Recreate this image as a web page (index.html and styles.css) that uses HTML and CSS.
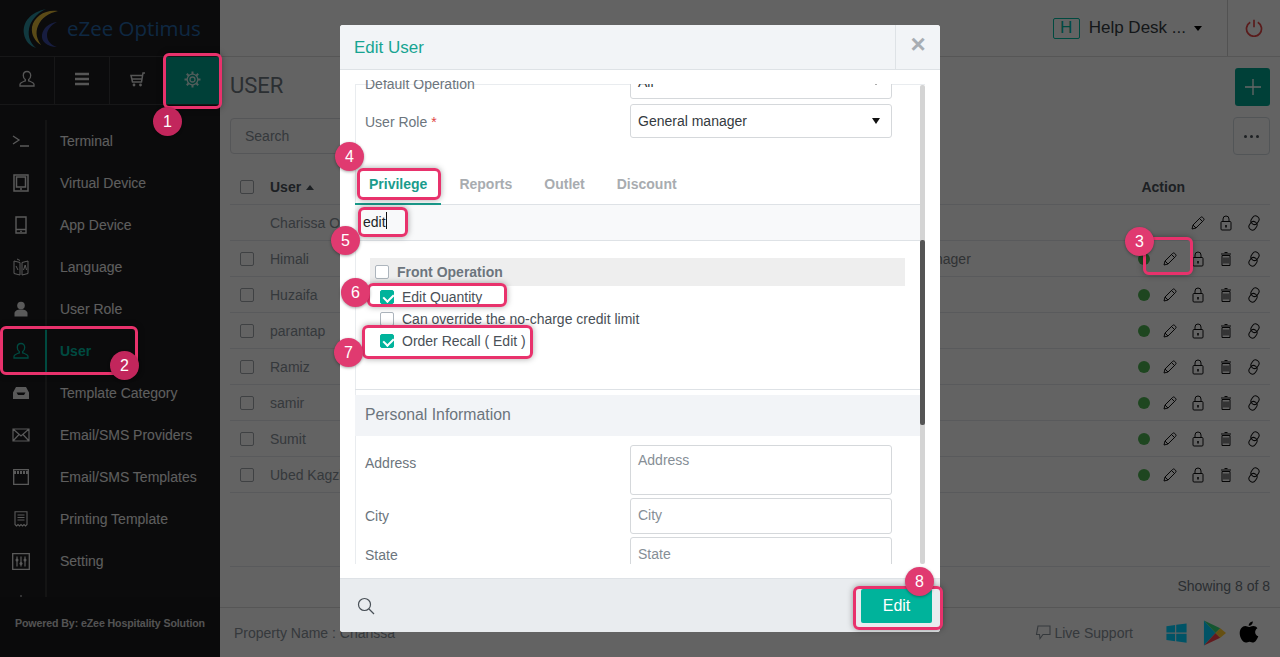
FILE: index.html
```html
<!DOCTYPE html>
<html lang="en">
<head>
<meta charset="utf-8">
<title>Edit User</title>
<link rel="stylesheet" href="styles.css">
</head>
<body>
<svg class="defs" width="0" height="0" aria-hidden="true">
  <symbol id="i-pencil" viewBox="0 0 16 16"><path d="M2 14l1-4 7.500-7.500a1.600 1.600 0 0 1 2.300 0l.7.7a1.600 1.600 0 0 1 0 2.300L6 13zM3 10l3 3M9.500 3.500l3 3" fill="none" stroke="currentColor" stroke-width="1" stroke-linejoin="round"/></symbol>
  <symbol id="i-lock" viewBox="0 0 16 16"><path d="M3 7.500q0-1 1-1h8q1 0 1 1v6.500q0 1-1 1H4q-1 0-1-1zM5 6.500V4a3 3 0 0 1 6 0v2.500" fill="none" stroke="currentColor" stroke-width="1"/><path d="M8 10v2.500" stroke="currentColor" stroke-width="1.600"/></symbol>
  <symbol id="i-trash" viewBox="0 0 16 16"><path d="M4 4.500h8v10H4zM3 3h10M6.500 1.500h3M6 6.500v6M8 6.500v6M10 6.500v6" fill="none" stroke="currentColor" stroke-width="1"/></symbol>
  <symbol id="i-link" viewBox="0 0 16 16"><rect x="5.500" y="0.800" width="7" height="8.800" rx="3.500" transform="rotate(35 9 5.200)" fill="none" stroke="currentColor"/><rect x="3.500" y="6.400" width="7" height="8.800" rx="3.500" transform="rotate(35 7 10.800)" fill="none" stroke="currentColor"/></symbol>
  <symbol id="i-user" viewBox="0 0 18 18"><path d="M9 1.500c-2.400 0-3.700 1.800-3.700 4 0 1.700.8 3.200 2 4v1.300c-1.800.8-5.300 1.700-5.300 3.700v1.500h14v-1.500c0-2-3.500-2.900-5.300-3.700V9.500c1.200-.8 2-2.300 2-4 0-2.200-1.300-4-3.700-4z" fill="none" stroke="currentColor" stroke-width="1.300"/></symbol>
</svg>

<div class="app">
  <aside class="sidebar">
    <div class="logo">
      <svg class="logo-mark" width="44" height="44" viewBox="0 0 44 44">
        <path d="M27 3C12 6 3 16 5 28c1 7 6 12 12 14C10 36 8 28 11 19c3-7 9-13 16-16z" fill="#2b8f9e"/>
        <path d="M39 5C27 3 15 10 13 21c-1 8 3 14 9 18-4-6-6-12-3-19C22 12 30 7 39 5z" fill="#e0b93a"/>
        <path d="M38 16C30 17 24 22 23 29c-1 6 5 12 15 12-6-2-10-6-10-12 0-5 4-10 10-13z" fill="#3a4aa0"/>
      </svg>
      <span class="logo-text">eZee Optimus</span>
    </div>
    <nav class="tabs">
      <a class="tab"><svg width="18" height="18"><use href="#i-user"/></svg></a>
      <a class="tab"><svg width="16" height="14" viewBox="0 0 16 14"><path d="M1 2h14M1 7h14M1 12h14" stroke="currentColor" stroke-width="2.400"/></svg></a>
      <a class="tab"><svg width="17" height="16" viewBox="0 0 17 16"><path d="M16 2h-2l-1.500 9H3.500L2 4.500h11.300M3.500 8h9" fill="none" stroke="currentColor" stroke-width="1.500"/><circle cx="5" cy="14" r="1.400" fill="currentColor"/><circle cx="11.500" cy="14" r="1.400" fill="currentColor"/></svg></a>
      <a class="tab tab-on"><svg width="17" height="17" viewBox="0 0 17 17"><circle cx="8.500" cy="8.500" r="2.500" fill="none" stroke="currentColor" stroke-width="1.300"/><circle cx="8.500" cy="8.500" r="5.300" fill="none" stroke="currentColor" stroke-width="1.300"/><path d="M8.500 0.500v2.600M8.500 13.900v2.600M.5 8.500h2.600M13.900 8.500h2.600M2.800 2.800l1.900 1.900M12.300 12.300l1.900 1.900M14.200 2.800l-1.900 1.900M4.700 12.300l-1.900 1.900" stroke="currentColor" stroke-width="2"/></svg></a>
    </nav>
    <ul class="menu">
      <li class="item"><span class="ico"><svg width="18" height="12" viewBox="0 0 18 12"><path d="M1 1l6 4-6 4M8 11h9" fill="none" stroke="currentColor" stroke-width="1.300"/></svg></span><span class="lbl">Terminal</span></li>
      <li class="item"><span class="ico"><svg width="16" height="18" viewBox="0 0 16 18"><path d="M1 1h14v16H1zM3.500 3h9v10h-9z" fill="none" stroke="currentColor" stroke-width="1.500"/><circle cx="8" cy="15" r="1" fill="currentColor"/></svg></span><span class="lbl">Virtual Device</span></li>
      <li class="item"><span class="ico"><svg width="12" height="18" viewBox="0 0 12 18"><path d="M1 1h10v16H1zM1 13.500h10" fill="none" stroke="currentColor" stroke-width="1.400"/><path d="M5 15.300h2" stroke="currentColor"/></svg></span><span class="lbl">App Device</span></li>
      <li class="item"><span class="ico"><svg width="16" height="18" viewBox="0 0 16 18"><path d="M1 3l6 1.500V17l-6-1.500zM9 4.500L15 3v12.500L9 17zM4 1l3 1.500" fill="none" stroke="currentColor"/><path d="M3 8l2 4M10.500 12l1.700-5 1.300 5" fill="none" stroke="currentColor"/></svg></span><span class="lbl">Language</span></li>
      <li class="item"><span class="ico"><svg width="14" height="16" viewBox="0 0 14 16"><circle cx="7" cy="4.500" r="3.800" fill="currentColor"/><path d="M0.500 15.500v-3c0-2.500 2.500-4 6.500-4s6.500 1.500 6.500 4v3z" fill="currentColor"/></svg></span><span class="lbl">User Role</span></li>
      <li class="item item-on"><span class="ico"><svg width="18" height="18"><use href="#i-user"/></svg></span><span class="lbl">User</span></li>
      <li class="item"><span class="ico"><svg width="16" height="12" viewBox="0 0 16 12"><path d="M3 0h10l3 5.500V12H0V5.500zM3.500 5.500l1.500 2.500h6l1.500-2.500z" fill="currentColor" fill-rule="evenodd"/></svg></span><span class="lbl">Template Category</span></li>
      <li class="item"><span class="ico"><svg width="18" height="14" viewBox="0 0 18 14"><path d="M1 1h16v12H1zM1 1l8 7 8-7M1 13l6-6.500M17 13l-6-6.500" fill="none" stroke="currentColor" stroke-width="1.200"/></svg></span><span class="lbl">Email/SMS Providers</span></li>
      <li class="item"><span class="ico"><svg width="16" height="16" viewBox="0 0 16 16"><path d="M.7 .7h14.600v14.600H.7z" fill="none" stroke="currentColor" stroke-width="1.300"/><path d="M1 3.500h14" stroke="currentColor" stroke-width="3" stroke-dasharray="2 1"/></svg></span><span class="lbl">Email/SMS Templates</span></li>
      <li class="item"><span class="ico"><svg width="14" height="16" viewBox="0 0 14 16"><path d="M1 .7h12V13.500l-1.500 1.500-1.500-1.500-1.500 1.500L7 13.500 5.500 15 4 13.500 2.500 15 1 13.500zM3.500 4h7M3.500 6.500h7M3.500 9h7" fill="none" stroke="currentColor" stroke-width="1.100"/></svg></span><span class="lbl">Printing Template</span></li>
      <li class="item"><span class="ico"><svg width="18" height="17" viewBox="0 0 18 17"><path d="M.7 .7h16.600v15.600H.7z" fill="none" stroke="currentColor" stroke-width="1.300"/><path d="M5 3.500v10M9 3.500v10M13 3.500v10" stroke="currentColor" stroke-width="1.200"/><circle cx="5" cy="7" r="1.500" fill="currentColor"/><circle cx="9" cy="10.500" r="1.500" fill="currentColor"/><circle cx="13" cy="7" r="1.500" fill="currentColor"/></svg></span><span class="lbl">Setting</span></li>
      <li class="item"><span class="ico"><svg width="4" height="16" viewBox="0 0 4 16"><path d="M1 1h2" stroke="currentColor"/></svg></span></li>
    </ul>
    <div class="powered">Powered By: eZee Hospitality Solution</div>
  </aside>

  <div class="main">
    <header class="topbar">
      <span class="h-badge">H</span>
      <span class="desk">Help Desk ...</span>
      <span class="caret"></span>
      <span class="power"><svg width="18" height="18" viewBox="0 0 18 18"><path d="M5.200 3.300a7.500 7.500 0 1 0 7.600 0M9 .8v7.500" fill="none" stroke="#e04545" stroke-width="1.700"/></svg></span>
    </header>
    <section class="content">
      <div class="title-row">
        <h1>USER</h1>
        <button class="add"><svg width="18" height="18" viewBox="0 0 18 18"><path d="M9 1v16M1 9h16" stroke="#fff" stroke-width="1.300"/></svg></button>
      </div>
      <div class="search-row">
        <div class="search">Search</div>
        <button class="more"><i></i><i></i><i></i></button>
      </div>
      <div class="table">
        <div class="row head"><span class="cb"></span><span class="name">User <em class="up"></em></span><span class="action">Action</span></div>
        <div class="row"><span class="name plain">Charissa Owner</span><span class="acts"><svg><use href="#i-pencil"/></svg><svg><use href="#i-lock"/></svg><svg><use href="#i-link"/></svg></span></div>
        <div class="row"><span class="cb"></span><span class="name">Himali</span><span class="role">Manager</span><span class="acts"><u class="dot"></u><svg><use href="#i-pencil"/></svg><svg><use href="#i-lock"/></svg><svg><use href="#i-trash"/></svg><svg><use href="#i-link"/></svg></span></div>
        <div class="row"><span class="cb"></span><span class="name">Huzaifa</span><span class="acts"><u class="dot"></u><svg><use href="#i-pencil"/></svg><svg><use href="#i-lock"/></svg><svg><use href="#i-trash"/></svg><svg><use href="#i-link"/></svg></span></div>
        <div class="row"><span class="cb"></span><span class="name">parantap</span><span class="acts"><u class="dot"></u><svg><use href="#i-pencil"/></svg><svg><use href="#i-lock"/></svg><svg><use href="#i-trash"/></svg><svg><use href="#i-link"/></svg></span></div>
        <div class="row"><span class="cb"></span><span class="name">Ramiz</span><span class="acts"><u class="dot"></u><svg><use href="#i-pencil"/></svg><svg><use href="#i-lock"/></svg><svg><use href="#i-trash"/></svg><svg><use href="#i-link"/></svg></span></div>
        <div class="row"><span class="cb"></span><span class="name">samir</span><span class="acts"><u class="dot"></u><svg><use href="#i-pencil"/></svg><svg><use href="#i-lock"/></svg><svg><use href="#i-trash"/></svg><svg><use href="#i-link"/></svg></span></div>
        <div class="row"><span class="cb"></span><span class="name">Sumit</span><span class="acts"><u class="dot"></u><svg><use href="#i-pencil"/></svg><svg><use href="#i-lock"/></svg><svg><use href="#i-trash"/></svg><svg><use href="#i-link"/></svg></span></div>
        <div class="row"><span class="cb"></span><span class="name">Ubed Kagzi</span><span class="acts"><u class="dot"></u><svg><use href="#i-pencil"/></svg><svg><use href="#i-lock"/></svg><svg><use href="#i-trash"/></svg><svg><use href="#i-link"/></svg></span></div>
      </div>
      <div class="spacer"></div>
      <div class="showing">Showing 8 of 8</div>
    </section>
    <footer class="foot">
      <span class="prop">Property Name : Charissa</span>
      <span class="live"><svg width="16" height="15" viewBox="0 0 16 15"><path d="M3 1h12v8.500H8L5 13.500l-.5-4H1.500z" fill="none" stroke="currentColor" stroke-width="1.100"/></svg>Live Support</span>
      <svg class="store win" width="23" height="22" viewBox="0 0 24 24"><path d="M1 4.500l9.500-1.300v8.300H1zM11.700 3L23 1.500v10H11.700zM1 12.700h9.500V21L1 19.700zM11.700 12.700H23v10L11.700 21z" fill="#00d0ff"/></svg>
      <svg class="store" width="23" height="26" viewBox="0 0 24 26"><path d="M1 0v26l12-13z" fill="#00d0ff"/><path d="M1 0l12 13 5-5z" fill="#36d87a"/><path d="M1 26l12-13 5 5z" fill="#f5434b"/><path d="M18 8l6 5-6 5-5-5z" fill="#ffc82d"/></svg>
      <svg class="store" width="20" height="23" viewBox="0 0 20 24"><path d="M14 .5c.1 2.500-2 4.700-4.300 4.500C9.500 2.700 11.800.6 14 .5zM10 6.300c1 0 2.500-1.200 4.500-1.200 1.700 0 3.300.9 4.300 2.400-3.500 2-3 7 .9 8.500-1 2.700-3 6.500-5.200 6.500-1.400 0-2.200-.9-3.900-.9s-2.600.9-3.900.9C3.500 22.500.3 17 .3 12.800c0-4.500 2.900-7.500 5.700-7.500 1.700 0 3 1 4 1z" fill="#000"/></svg>
    </footer>
  </div>
</div>

<div class="overlay"></div>
<div class="under-role">nager</div>

<div class="modal">
  <div class="m-head"><h2>Edit User</h2><span class="close">&times;</span></div>
  <div class="m-body">
    <div class="scroller">
      <div class="f-row clip"><label>Default Operation</label><div class="field sel">All<span class="caret dark"></span></div></div>
      <div class="f-row role-row"><label>User Role <b>*</b></label><div class="field sel">General manager<span class="caret dark"></span></div></div>
      <div class="m-tabs"><span class="m-tab on">Privilege</span><span class="m-tab">Reports</span><span class="m-tab">Outlet</span><span class="m-tab">Discount</span></div>
      <div class="filter">edit<span class="cursor"></span></div>
      <div class="priv">
        <div class="priv-head"><span class="box"></span>Front Operation</div>
        <div class="priv-item"><span class="box on"></span>Edit Quantity</div>
        <div class="priv-item"><span class="box"></span>Can override the no-charge credit limit</div>
        <div class="priv-item"><span class="box on"></span>Order Recall ( Edit )</div>
      </div>
      <div class="sec">Personal Information</div>
      <div class="f-row addr"><label>Address</label><div class="field area">Address</div></div>
      <div class="f-row"><label>City</label><div class="field ph">City</div></div>
      <div class="f-row"><label>State</label><div class="field ph">State</div></div>
      <i class="thumb"></i>
    </div>
  </div>
  <div class="m-foot">
    <svg width="18" height="18" viewBox="0 0 18 18"><circle cx="7.500" cy="7.500" r="6" fill="none" stroke="#495057" stroke-width="1.200"/><path d="M12 12l5 5" stroke="#495057" stroke-width="1.200"/></svg>
    <button class="save">Edit</button>
  </div>
</div>

<div class="mark m1"></div><div class="num n1">1</div>
<div class="mark m2"></div><div class="num n2">2</div>
<div class="mark m3"></div><div class="num n3">3</div>
<div class="mark m4"></div><div class="num n4">4</div>
<div class="mark m5"></div><div class="num n5">5</div>
<div class="mark m6"></div><div class="num n6">6</div>
<div class="mark m7"></div><div class="num n7">7</div>
<div class="mark m8"></div><div class="num n8">8</div>
</body>
</html>
```

FILE: styles.css
```css
* { box-sizing: border-box; }
html, body { margin: 0; height: 657px; overflow: hidden; }
body { font-family: "Liberation Sans", Arial, sans-serif; font-size: 14px; color: #6c757d; background: #fff; position: relative; }
.defs { position: absolute; }
.app { display: flex; height: 657px; }

/* sidebar */
.sidebar { width: 220px; flex: none; background: #1c1c1f; color: #fff; display: flex; flex-direction: column; }
.logo { height: 57px; display: flex; align-items: center; padding-left: 19px; border-bottom: 1px solid #3a3a3d; }
.logo-mark { flex: none; margin-right: 4px; }
.logo-text { font-family: "Open Sans", sans-serif; font-size: 20.500px; color: #2565a5; }
.tabs { display: flex; height: 48px; border-bottom: 1px solid #3a3a3d; }
.tab { width: 55px; display: flex; align-items: center; justify-content: center; border-right: 1px solid #3a3a3d; padding-bottom: 3px; color: #d8d8d8; }
.tab-on { background: #00a08c; border: 0; color: #c8e8e2; }
.menu { list-style: none; margin: 15px 0 0; padding: 0; height: 477px; overflow: hidden; }
.item { height: 42px; display: flex; align-items: center; }
.ico { width: 47px; height: 100%; flex: none; display: flex; align-items: center; justify-content: center; padding-right: 4px; border-right: 2px solid #333; color: #e0e0e0; }
.lbl { padding-left: 13px; color: #ececec; }
.item-on .ico { color: #00b8a0; border-right-color: #00b8a0; }
.item-on .lbl { color: #00b8a0; font-weight: bold; }
.powered { margin-top: auto; height: 60px; background: #1a1a1d; padding-top: 20px; text-align: center; font-size: 10.600px; font-weight: bold; color: #d0d0d0; letter-spacing: -.1px; }

/* main */
.main { flex: 1; min-width: 0; display: flex; flex-direction: column; background: #f7f7f8; }
.topbar { height: 57px; flex: none; display: flex; align-items: center; border-bottom: 1px solid #d6d6d6; justify-content: flex-end; }
.h-badge { width: 27px; height: 21px; border: 1px solid #00b8a0; border-radius: 2px; color: #00b8a0; font-size: 17px; display: flex; align-items: center; justify-content: center; margin-right: 9px; }
.desk { font-size: 17px; color: #343a40; margin-right: 8px; }
.caret { width: 0; height: 0; border: 4px solid transparent; border-top: 5px solid #000; border-bottom: 0; }
.power { width: 53px; height: 56px; margin-left: 25px; border-left: 1px solid #ccc; display: flex; align-items: center; justify-content: center; }
.content { flex: 1; min-height: 0; padding: 0 10px; display: flex; flex-direction: column; }
.title-row { display: flex; justify-content: space-between; height: 61px; padding-top: 11px; }
h1 { margin: 5px 0 0; font-size: 22px; font-weight: 400; color: #6c757d; font-family: Roboto, sans-serif; }
.add { width: 35px; height: 38px; border: 0; border-radius: 3px; background: #00a08c; padding: 0; display: flex; align-items: center; justify-content: center; }
.search-row { display: flex; justify-content: space-between; height: 51px; }
.search { width: 340px; height: 36px; border: 1px solid #d5d8db; border-radius: 4px; padding: 9px 14px; color: #868e96; }
.more { width: 37px; height: 38px; background: transparent; border: 1px solid #ced4da; border-radius: 4px; display: flex; gap: 3px; align-items: center; justify-content: center; padding: 0; margin-top: -1px; }
.more i { width: 3px; height: 3px; border-radius: 50%; background: #495057; }
.table { display: flex; flex-direction: column; }
.row { height: 36px; flex: none; display: flex; align-items: center; border-bottom: 1px solid #dee2e6; padding-left: 10px; position: relative; color: #868e96; }
.head { height: 37px; color: #495057; font-weight: bold; margin-top: -1px; padding-top: 2px; }
.cb { width: 14px; height: 14px; border: 1px solid #9da3a8; border-radius: 2px; margin-right: 16px; flex: none; }
.plain { margin-left: 30px; }
.up { display: inline-block; border: 4px solid transparent; border-bottom: 5px solid #495057; border-top: 0; vertical-align: 2px; margin-left: 1px; }
.action { margin-left: auto; margin-right: 85px; }
.role { display: none; }
.under-role { position: absolute; left: 935px; top: 251px; color: #303234; }
.acts { margin-left: auto; display: flex; align-items: center; gap: 12px; margin-right: 8px; color: #111; }
.acts svg { width: 16px; height: 16px; }
.dot { width: 12px; height: 12px; border-radius: 50%; background: #4caf50; }
.spacer { flex: 1; border-bottom: 1px solid #dee2e6; }
.showing { height: 40px; text-align: right; padding-top: 11px; color: #6c757d; }
.foot { height: 50px; flex: none; border-top: 1px solid #d6d6d6; display: flex; align-items: center; padding: 0 21px 0 14px; color: #868e96; }
.prop { margin-right: auto; }
.live { display: flex; align-items: center; gap: 3px; margin-right: 32px; }
.store { margin-right: 13px; flex: none; }
.win { margin-right: 15px; }
.store:last-child { margin-right: 0; }

/* overlay */
.overlay { position: absolute; inset: 0; background: rgba(0, 0, 0, .6); }

/* modal */
.modal { position: absolute; left: 340px; top: 25px; width: 600px; height: 607px; background: #fff; display: flex; flex-direction: column; border-radius: 3px; overflow: hidden; }
.m-head { height: 45px; flex: none; background: #f2f4f7; border-bottom: 1px solid #dee2e6; display: flex; align-items: center; justify-content: space-between; padding-left: 14px; }
h2 { margin: 2px 0 0; font-size: 17px; font-weight: 400; color: #17a492; }
.close { width: 45px; height: 44px; border-left: 1px solid #dee2e6; display: flex; align-items: center; justify-content: center; font-size: 26px; font-weight: bold; color: #a8adb3; padding-bottom: 6px; }
.m-body { height: 508px; flex: none; padding: 10px 15px 14px; }
.scroller { height: 484px; overflow: hidden; position: relative; }
.scroller::before { content: ""; position: absolute; left: 0; top: 4px; right: 0; bottom: 0; border-top: 1px solid #e9ecef; border-left: 1px solid #e9ecef; }
.scroller::after { content: ""; position: absolute; right: 0; top: 5px; width: 5px; bottom: 0; background: #d4d4d4; border-radius: 2px; }
.f-row { display: grid; grid-template-columns: 265px 262px; padding: 0 0 3px 10px; align-items: start; position: relative; }
.f-row label { color: #6c757d; padding-top: 10px; }
.f-row b { color: #e04545; font-weight: 400; }
.clip { height: 19px; padding-bottom: 0; overflow: hidden; }
.clip label { position: relative; top: -13px; padding-top: 9px; }
.clip .field { position: relative; top: -15px; clip-path: inset(19px -1px -1px -1px); }
.role-row { margin-top: 5px; }
.field { border: 1px solid #d5d8db; border-radius: 3px; height: 36px; padding: 8px 7px; color: #495057; display: flex; justify-content: space-between; align-items: flex-start; background: #fff; }
.sel { height: 34px; color: #343a40; padding: 0 11px 0 7px; align-items: center; }
.caret.dark { border-top: 6px solid #111; border-left-width: 4.500px; border-right-width: 4.500px; border-bottom: 0; }
.ph, .area { color: #868e96; }
.area { height: 50px; padding-top: 6px; }
.addr { margin-top: 9px; }
.m-tabs { margin-top: 26px; height: 38px; border-bottom: 1px solid #dee2e6; display: flex; font-weight: bold; color: #a8acb0; width: 565px; position: relative; }
.m-tab { padding: 9px 14px 0; margin-right: 4px; height: 37px; }
.m-tab.on { color: #1a9c8c; border-bottom: 2px solid #1a9c8c; height: 38px; }
.filter { height: 36px; width: 565px; background: #f8f9fa; padding: 9px 8px 0; color: #212529; display: flex; align-items: flex-start; border-bottom: 1px solid #dee2e6; position: relative; }
.cursor { width: 1px; height: 17px; background: #111; margin-top: -2px; }
.priv { height: 149px; width: 565px; padding: 17px 15px 0; border-bottom: 1px solid #dee2e6; color: #495057; position: relative; }
.priv-head { height: 28px; background: #eee; display: flex; align-items: center; padding-left: 5px; font-weight: bold; color: #6c757d; }
.priv-item { height: 22px; display: flex; align-items: center; padding-left: 10px; }
.box { width: 14px; height: 14px; border: 1px solid #adb5bd; border-radius: 2px; margin-right: 8px; flex: none; background: #fff; position: relative; }
.box.on { background: #00b39b; border-color: #00b39b; }
.box.on::after { content: ""; position: absolute; left: 3.500px; top: 1px; width: 5px; height: 8px; border: solid #fff; border-width: 0 2px 2px 0; transform: rotate(45deg); }
.sec { margin-top: 5px; height: 41px; width: 565px; background: #f2f4f7; padding: 11px 10px; font-size: 15.800px; color: #6c757d; position: relative; }
.thumb { position: absolute; right: 0; top: 160px; width: 5px; height: 185px; background: #555; border-radius: 2px; z-index: 1; }
.m-foot { flex: 1; background: #e9ecef; border-top: 1px solid #dee2e6; display: flex; align-items: center; justify-content: space-between; padding: 0 8px 0 17px; }
.save { width: 71px; height: 34px; border: 0; border-radius: 2px; background: #00b39b; color: #fff; font: 16px "Liberation Sans", Arial, sans-serif; }

/* annotations */
.mark { position: absolute; border: 3px solid #e8326c; border-radius: 6px; box-shadow: 0 0 6px rgba(0, 0, 0, .35); }
.num { position: absolute; width: 29px; height: 29px; border-radius: 50%; background: #e03a70; color: #fff; font-size: 16px; display: flex; align-items: center; justify-content: center; box-shadow: 0 1px 3px rgba(0, 0, 0, .35); }
.m1 { left: 163px; top: 53px; width: 59px; height: 56px; }
.n1 { left: 153px; top: 107px; background: #c2265c; }
.m2 { left: 0; top: 326px; width: 138px; height: 49px; }
.n2 { left: 110px; top: 351px; background: #c2265c; }
.m3 { left: 1143px; top: 237px; width: 50px; height: 38px; }
.n3 { left: 1125px; top: 227px; }
.m4 { left: 357px; top: 168px; width: 84px; height: 32px; }
.n4 { left: 335px; top: 142px; }
.m5 { left: 358px; top: 207px; width: 50px; height: 30px; }
.n5 { left: 331px; top: 226px; }
.m6 { left: 367px; top: 283px; width: 140px; height: 24px; }
.n6 { left: 341px; top: 278px; }
.m7 { left: 362px; top: 325px; width: 171px; height: 34px; }
.n7 { left: 334px; top: 338px; }
.m8 { left: 853px; top: 586px; width: 90px; height: 44px; }
.n8 { left: 905px; top: 567px; }
```
